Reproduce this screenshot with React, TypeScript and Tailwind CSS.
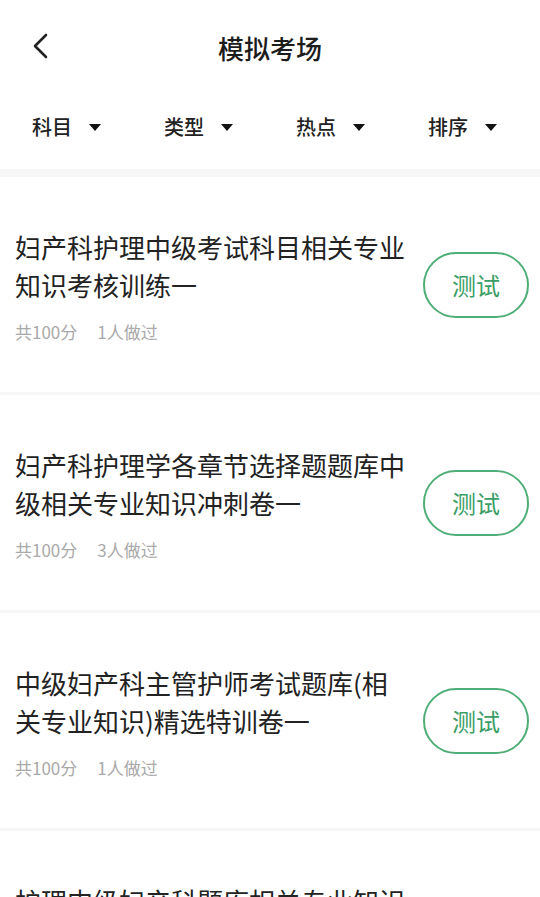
import React from "react";

type Exam = {
  title: string;
  score: number;
  done: number;
};

const exams: Exam[] = [
  { title: "妇产科护理中级考试科目相关专业知识考核训练一", score: 100, done: 1 },
  { title: "妇产科护理学各章节选择题题库中级相关专业知识冲刺卷一", score: 100, done: 3 },
  { title: "中级妇产科主管护师考试题库(相关专业知识)精选特训卷一", score: 100, done: 1 },
  { title: "护理中级妇产科题库相关专业知识考核训练二", score: 100, done: 2 },
];

const filters = ["科目", "类型", "热点", "排序"];

const font = { fontFamily: '"Noto Sans CJK SC", "Noto Sans", sans-serif' };

function ExamCard({ exam }: { exam: Exam }) {
  return (
    <div className="flex h-[215px] items-center bg-white pl-[15px] pr-[11px]">
      <div className="w-[393px] shrink-0">
        <p className="text-[26px] leading-[38px] text-[#222222]">{exam.title}</p>
        <div className="mt-[17px] flex gap-[20px] text-[17px] leading-[21px] text-[#a9a9a9]">
          <span>共{exam.score}分</span>
          <span>{exam.done}人做过</span>
        </div>
      </div>
      <div className="ml-auto flex h-[66px] w-[106px] items-center justify-center rounded-full border-2 border-[#4fae78] text-[24px] text-[#3a9d65]">
        测试
      </div>
    </div>
  );
}

export default function App() {
  return (
    <div className="h-[897px] w-[540px] overflow-hidden bg-[#f7f7f7]" style={font}>
      <header className="bg-white">
        <div className="relative flex h-[94px] items-center justify-center">
          <svg
            className="absolute left-[32px] top-[33px]"
            width="18"
            height="27"
            viewBox="0 0 18 27"
            fill="none"
            stroke="#222222"
            strokeWidth="2.6"
            strokeLinecap="round"
            strokeLinejoin="round"
          >
            <polyline points="14,2 3,13 14,24" />
          </svg>
          <h1 className="text-[26px] font-medium text-[#1c1c1c]">模拟考场</h1>
        </div>
        <div className="grid h-[75px] grid-cols-[repeat(4,132px)] items-start pl-[32px] pt-[21px]">
          {filters.map((f) => (
            <div key={f} className="flex items-center gap-[17px]">
              <span className="text-[20px] font-medium leading-[24px] text-[#222222]">{f}</span>
              <svg width="12" height="7" viewBox="0 0 12 7">
                <polygon points="0,0 12,0 6,7" fill="#111111" />
              </svg>
            </div>
          ))}
        </div>
      </header>
      <div className="mt-[8px] flex flex-col gap-[3px]">
        {exams.map((e) => (
          <ExamCard key={e.title} exam={e} />
        ))}
      </div>
    </div>
  );
}
